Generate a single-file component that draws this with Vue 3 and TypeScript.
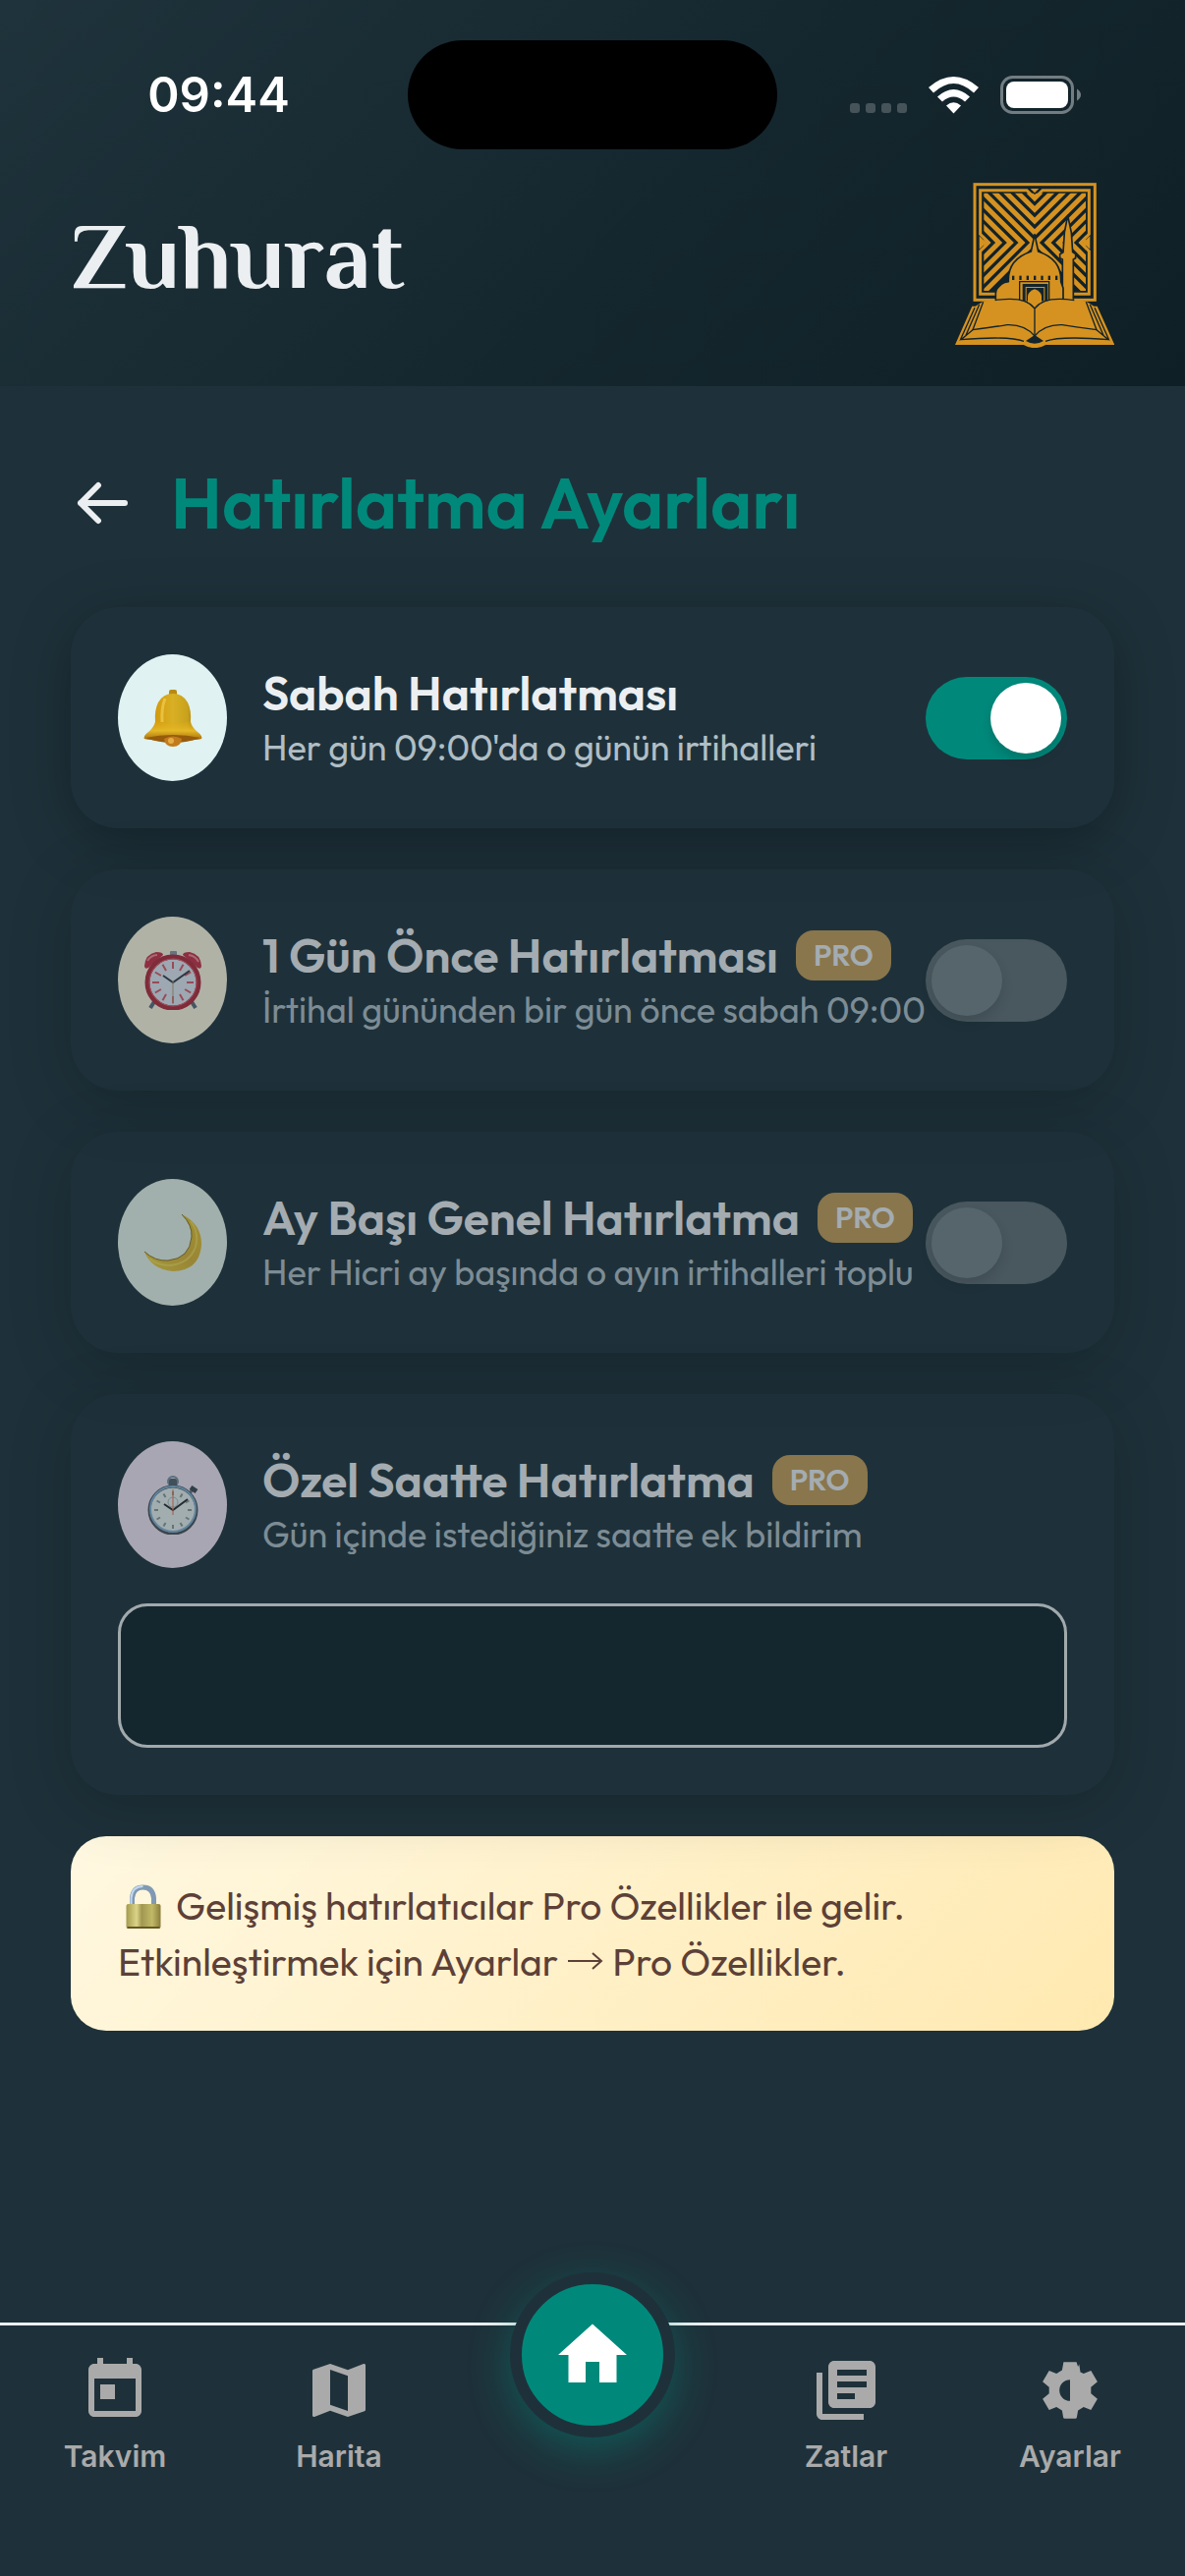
<script setup lang="ts">
import { ref } from 'vue'

type IconName = 'bell' | 'alarm' | 'moon' | 'stopwatch'

interface Reminder {
  id: string
  title: string
  text: string
  icon: IconName
  tint: string
  pro: boolean
  enabled: boolean
  custom?: boolean
}

interface Tab {
  label: string
  path: string
}

const reminders = ref<Reminder[]>([
  { id: 'sabah', title: 'Sabah Hatırlatması', text: "Her gün 09:00'da o günün irtihalleri", icon: 'bell', tint: '#e0f2f1', pro: false, enabled: true },
  { id: 'once', title: '1 Gün Önce Hatırlatması', text: 'İrtihal gününden bir gün önce sabah 09:00', icon: 'alarm', tint: '#fff8e1', pro: true, enabled: false },
  { id: 'aybasi', title: 'Ay Başı Genel Hatırlatma', text: 'Her Hicri ay başında o ayın irtihalleri toplu', icon: 'moon', tint: '#e8f5e9', pro: true, enabled: false },
  { id: 'ozel', title: 'Özel Saatte Hatırlatma', text: 'Gün içinde istediğiniz saatte ek bildirim', icon: 'stopwatch', tint: '#f3e5f5', pro: true, enabled: false, custom: true },
])

const customTime = ref('')

const leftTabs: Tab[] = [
  { label: 'Takvim', path: 'M19 3h-1V1h-2v2H8V1H6v2H5c-1.11 0-1.99.9-1.99 2L3 19c0 1.1.89 2 2 2h14c1.1 0 2-.9 2-2V5c0-1.1-.9-2-2-2zm0 16H5V8h14v11zM7 10h5v5H7z' },
  { label: 'Harita', path: 'M20.5 3l-.16.03L15 5.1 9 3 3.36 4.9c-.21.07-.36.25-.36.48V20.5c0 .28.22.5.5.5l.16-.03L9 18.9l6 2.1 5.64-1.9c.21-.07.36-.25.36-.48V3.5c0-.28-.22-.5-.5-.5zM15 19l-6-2.11V5l6 2.11V19z' },
]

const rightTabs: Tab[] = [
  { label: 'Zatlar', path: 'M4 6H2v14c0 1.1.9 2 2 2h14v-2H4V6zm16-4H8c-1.1 0-2 .9-2 2v12c0 1.1.9 2 2 2h12c1.1 0 2-.9 2-2V4c0-1.1-.9-2-2-2zm-1 5H9V5h10v2zm-4 8H9v-2h6v2zm4-4H9V9h10v2z' },
  { label: 'Ayarlar', path: 'M9.8 2.4H14.2L14.7 4 15.1 3.2 15.5 5.8 16.6 6.3 19.1 5.3 21.3 9.1 19.1 10.9V13.1L21.3 14.9 19.1 18.7 16.6 17.7 14.7 18.8 14.3 21.2Q14.2 21.6 13.8 21.6H10.2Q9.8 21.6 9.7 21.2L9.3 18.8 7.4 17.7 4.9 18.7 2.7 14.9 4.9 13.1V10.9L2.7 9.1 4.9 5.3 7.4 6.3 9.3 5.2ZM12 8.4A3.6 3.6 0 0 0 12 15.6Z' },
]

// Tip heights of the V stripes and tip positions of the sideways chevrons in the crest
const vTips = [95, 130, 165, 200]
const sideTips = [305, 270, 235, 200, 165]
const ticks = Array.from({ length: 12 }, (_, i) => i * 30)
</script>

<template>
  <div class="screen">
    <header class="top">
      <div class="status">
        <time class="clock">09:44</time>
        <div class="island"></div>
        <div class="signals">
          <svg class="dots" viewBox="0 0 58 10" aria-hidden="true">
            <rect v-for="n in 4" :key="n" :x="(n - 1) * 16" width="10" height="10" rx="3" />
          </svg>
          <svg class="wifi" viewBox="0 0 51 38" aria-hidden="true">
            <path d="M0 11Q25.500-11 51 11L46 16.500Q25.500-2.500 5 16.500ZM9 20.500Q25.500 5.500 42 20.500L37 25.500Q25.500 15.500 14 25.500ZM18 29.500Q25.500 23 33 29.500L25.500 37.500Z" />
          </svg>
          <svg class="battery" viewBox="0 0 82 39" aria-hidden="true">
            <rect x="1.500" y="1.500" width="72" height="36" rx="11" fill="none" stroke="#727d82" stroke-width="3" />
            <rect x="6" y="6" width="63" height="27" rx="8" fill="#fff" />
            <path d="M78 13.500Q82 16 82 19.500T78 25.500Z" fill="#727d82" />
          </svg>
        </div>
      </div>
      <div class="brand">
        <h1>Zuhurat</h1>
        <svg class="crest" viewBox="66 48 486 504" role="img" aria-label="Zuhurat">
          <defs>
            <clipPath id="field"><rect x="154" y="80" width="311" height="298" /></clipPath>
          </defs>
          <g fill="none" stroke="#d59220">
            <rect x="126" y="53" width="367" height="353" stroke-width="9" />
            <path d="M143 71H285L309 95 333 71H475V205L450 231 475 257V388H143V257L168 231 143 205Z" stroke-width="9" />
            <g clip-path="url(#field)" stroke-width="15">
              <path v-for="t in vTips" :key="`v${t}`" :d="`M109 ${t - 200}L309 ${t}L509 ${t - 200}`" />
              <path v-for="x in sideTips" :key="`l${x}`" :d="`M${x - 200} 31L${x} 231L${x - 200} 431`" />
              <path v-for="x in sideTips" :key="`r${x}`" :d="`M${818 - x} 31L${618 - x} 231L${818 - x} 431`" />
            </g>
          </g>
          <path d="M296 66H322L309 79ZM140 211 161 231 140 251ZM478 211 457 231 478 251Z" fill="#d59220" />
          <g fill="#d59220" stroke="#13242b" stroke-width="5" stroke-linejoin="round">
            <path d="M394 412V282L386 278V266L396 260 400 200 410 148 421 200 425 260 434 266V278L427 282V412Z" />
            <path d="M190 412V385Q192 364 218 352L229 350Q226 282 298 258L309 206 320 258Q392 282 389 350L396 370V412Z" />
          </g>
          <g fill="#13242b">
            <rect v-for="n in 7" :key="n" :x="218 + n * 22" y="332" width="7" height="13" />
            <path d="M261 408V348H355V408H351V352H265V408Z" />
            <path d="M272 408V357H349V408H340V366H281V408Z" />
            <path d="M284 408V369H337V408Z" />
          </g>
          <path d="M288 412V394Q290 380 309 373 328 380 330 394V425L309 434Z" fill="#d59220" />
          <path d="M118 425H128L152 410Q270 388 309 432 348 388 466 410L490 425H500L553 543H343Q309 562 275 543H66Z" fill="#d59220" />
          <g fill="none" stroke="#13242b" stroke-width="4">
            <path d="M188 407Q280 392 309 432 338 392 430 407M309 432V516" />
            <path d="M152 412 120 497Q190 488 225 482 278 480 309 516 340 480 393 482 428 488 498 497L466 412" />
            <path d="M126 430 82 528M140 420 98 516M492 430 536 528M478 420 520 516M120 497 84 527Q230 515 276 532M498 497 534 527Q388 515 342 532" />
          </g>
          <path d="M282 531 309 513 336 531Q309 548 282 531Z" fill="#13242b" />
        </svg>
      </div>
    </header>

    <main>
      <div class="heading">
        <button type="button" class="back" aria-label="Geri">
          <svg viewBox="0 0 54 54" aria-hidden="true"><path d="M28 9 10 27 28 45M10 27H55" /></svg>
        </button>
        <h2>Hatırlatma Ayarları</h2>
      </div>

      <section v-for="r in reminders" :key="r.id" class="card" :class="{ locked: r.pro }">
        <div class="row">
          <div class="badge-icon" :style="{ background: r.tint }">
            <svg v-if="r.icon === 'bell'" viewBox="0 0 60 60" aria-hidden="true">
              <defs>
                <linearGradient id="bellBody">
                  <stop offset="0" stop-color="#9d6305" /><stop offset=".2" stop-color="#d39a0e" />
                  <stop offset=".5" stop-color="#d9b024" /><stop offset=".75" stop-color="#c8a21c" /><stop offset="1" stop-color="#8f5c08" />
                </linearGradient>
                <linearGradient id="bellRim" x1="0" y1="0" x2="0" y2="1">
                  <stop offset="0" stop-color="#e0a915" stop-opacity="0" /><stop offset=".5" stop-color="#e4b826" /><stop offset="1" stop-color="#a0640a" />
                </linearGradient>
              </defs>
              <rect x="26" y="1" width="8" height="7" rx="2" fill="#b88a12" />
              <path d="M12 34Q11 22 15 14 20 5 30 5T45 14Q49 22 48 34 49 40 57 46 60 49 59 51 30 56 1 51 0 49 3 46 11 40 12 34Z" fill="url(#bellBody)" />
              <path d="M12 32Q30 40 48 32 49 40 57 46 60 49 59 51 30 56 1 51 0 49 3 46 11 40 12 32Z" fill="url(#bellRim)" />
              <path d="M2 50Q30 44 58 50 45 55 30 55T2 50Z" fill="#965c0b" />
              <path d="M21 51Q30 46 39 51 38 59 30 59T21 51Z" fill="#c27b1c" />
              <circle cx="28" cy="53" r="3" fill="#e6ac48" />
              <path d="M22 10Q18 20 19 34" fill="none" stroke="#f5d65a" stroke-width="3" stroke-opacity=".6" />
            </svg>
            <svg v-else-if="r.icon === 'alarm'" viewBox="0 0 60 60" aria-hidden="true">
              <path d="M12 50 7 58M48 50 53 58" stroke="#5b6b7c" stroke-width="4" />
              <path d="M1 15Q2 3 13 1 20 1 20 4L5 17Q1 19 1 15ZM59 15Q58 3 47 1 40 1 40 4L55 17Q59 19 59 15Z" fill="#c92f44" />
              <path d="M4 10Q8 4 14 4M46 4Q53 5 56 11" stroke="#f08b98" stroke-width="2" fill="none" />
              <rect x="27" y="0" width="7" height="5" rx="1" fill="#8b98a6" />
              <circle cx="30" cy="32" r="26" fill="#e2e8f2" stroke="#b3283a" stroke-width="5" />
              <circle cx="30" cy="32" r="24" fill="none" stroke="#e66575" stroke-width="1" />
              <path v-for="a in ticks" :key="a" d="M30 11V18" :transform="`rotate(${a} 30 32)`" stroke="#dc5868" stroke-width="2" />
              <path d="M20 25 30 32 47 20" fill="none" stroke="#333b45" stroke-width="2" />
              <path d="M30 30V54" stroke="#b89c78" stroke-width="1" />
            </svg>
            <svg v-else-if="r.icon === 'moon'" viewBox="0 0 60 60" aria-hidden="true">
              <defs>
                <linearGradient id="crescent" x1="0" y1="1" x2="1" y2="0">
                  <stop offset="0" stop-color="#efd23a" /><stop offset=".5" stop-color="#dcb334" /><stop offset="1" stop-color="#eac52b" />
                </linearGradient>
              </defs>
              <path d="M39 1Q59 11 59 31 58 58 30 59 8 57 1 39 12 49 25 48 48 45 49 23 49 12 39 1Z" fill="url(#crescent)" />
              <path d="M39 1Q50 12 49 24 47 46 25 48 12 49 1 39" fill="none" stroke="#8b721e" stroke-width="1" />
              <path d="M48 8Q57 20 53 34 47 51 27 53 14 53 6 46" fill="none" stroke="#f7e765" stroke-width="2" stroke-opacity=".6" />
            </svg>
            <svg v-else viewBox="0 0 60 60" aria-hidden="true">
              <circle cx="30" cy="6" r="5" fill="none" stroke="#7890a3" stroke-width="2" />
              <rect x="26" y="3" width="8" height="9" rx="2" fill="#53616c" />
              <path d="M47 18 51 13" stroke="#657b8c" stroke-width="3" />
              <path d="M48 12 54 16" stroke="#3c4650" stroke-width="5" />
              <circle cx="30" cy="35" r="24" fill="#e9f0f0" stroke="#4b5157" stroke-width="3" />
              <circle cx="30" cy="34" r="23" fill="none" stroke="#86b1d2" stroke-width="2" />
              <path v-for="a in ticks" :key="a" d="M30 16V20" :transform="`rotate(${a} 30 35)`" stroke="#8c9798" stroke-width="2" />
              <circle cx="30" cy="27" r="5" fill="none" stroke="#aeb9b9" />
              <path d="M21 29 30 35 45 24" fill="none" stroke="#26292c" stroke-width="2" />
              <path d="M30 14V40" stroke="#ed704d" stroke-width="1" />
            </svg>
          </div>
          <div class="copy">
            <div class="title-line">
              <label class="title" :for="r.id">{{ r.title }}</label>
              <span v-if="r.pro" class="pro">PRO</span>
            </div>
            <p>{{ r.text }}</p>
          </div>
          <input v-if="!r.custom" :id="r.id" v-model="r.enabled" class="toggle" type="checkbox" role="switch" :disabled="r.pro" />
        </div>
        <input v-if="r.custom" :id="r.id" v-model="customTime" class="time-field" type="text" disabled />
      </section>

      <p class="note">
        <svg class="lock" viewBox="0 0 48 48" aria-hidden="true">
          <defs>
            <linearGradient id="brass">
              <stop offset="0" stop-color="#a49a4f" /><stop offset=".3" stop-color="#dcd488" /><stop offset=".45" stop-color="#a19750" />
              <stop offset=".75" stop-color="#c1b968" /><stop offset="1" stop-color="#8a7d3a" />
            </linearGradient>
          </defs>
          <path d="M13 23V15Q14 4 24 4T35 15V23" fill="none" stroke="#8099b5" stroke-width="5" />
          <path d="M12 22V15Q13 3 24 3" fill="none" stroke="#c3d9ef" stroke-width="2" />
          <rect x="7" y="21" width="35" height="25" rx="2" fill="url(#brass)" />
          <path d="M8 45H41" stroke="#665822" stroke-width="2" />
        </svg>
        Gelişmiş hatırlatıcılar Pro Özellikler ile gelir.<br />
        Etkinleştirmek için Ayarlar
        <svg class="arrow" viewBox="0 0 39 30" aria-label="→"><path d="M2 15H36M27 7 36 15 27 23" /></svg>
        Pro Özellikler.
      </p>
    </main>

    <nav>
      <a v-for="t in leftTabs" :key="t.label" href="#">
        <svg viewBox="0 0 24 24" aria-hidden="true"><path :d="t.path" /></svg>
        <span>{{ t.label }}</span>
      </a>
      <a class="home" href="#" aria-label="Ana Sayfa">
        <svg viewBox="0 0 24 24" aria-hidden="true"><path d="M10 20v-6h4v6h5v-8h3L12 3 2 12h3v8z" /></svg>
      </a>
      <a v-for="t in rightTabs" :key="t.label" href="#">
        <svg viewBox="0 0 24 24" aria-hidden="true"><path fill-rule="evenodd" :d="t.path" /></svg>
        <span>{{ t.label }}</span>
      </a>
    </nav>
  </div>
</template>

<style>
body {
  margin: 0;
  background: #1e313a;
}
</style>

<style scoped>
* {
  box-sizing: border-box;
}

.screen {
  display: flex;
  flex-direction: column;
  min-height: 100vh;
  background: #1e313a;
  color: #eceff1;
  font-family: Outfit, Lato, "Open Sans", sans-serif;
}

h1,
h2,
p {
  margin: 0;
}

svg {
  display: block;
}

.top {
  padding: 41px 72px 39px;
  background: linear-gradient(135deg, #1f333c, #15272e 55%, #0f1f26);
}

.status {
  display: grid;
  grid-template-columns: 1fr 376px 1fr;
  align-items: center;
  height: 111px;
}

.clock {
  justify-self: center;
  padding-right: 42px;
  color: #fff;
  font: 600 49px/60px Inter, sans-serif;
}

.island {
  height: 111px;
  border-radius: 56px;
  background: #000;
}

.signals {
  display: flex;
  align-items: flex-end;
  justify-content: flex-end;
  gap: 22px;
  padding-right: 34px;
}

.dots {
  width: 58px;
  height: 10px;
  margin-bottom: 1px;
  fill: #465359;
}

.wifi {
  width: 51px;
  height: 38px;
  fill: #fff;
}

.battery {
  width: 82px;
  height: 39px;
}

.brand {
  display: flex;
  align-items: center;
  justify-content: space-between;
  margin-top: 34px;
}

h1 {
  font: 700 96px/108px "El Messiri", Philosopher, "Liberation Serif", serif;
}

.crest {
  width: 162px;
  height: 168px;
}

main {
  display: flex;
  flex-direction: column;
  gap: 42px;
  padding: 72px 72px 48px;
}

.heading {
  display: flex;
  align-items: center;
  gap: 48px;
  height: 93px;
  margin-bottom: 18px;
}

.back {
  padding: 0;
  border: 0;
  background: none;
}

.back svg {
  width: 54px;
  height: 54px;
  overflow: visible;
  fill: none;
  stroke: #eceff1;
  stroke-width: 6;
  stroke-linecap: round;
  stroke-linejoin: round;
}

h2 {
  color: #00897b;
  font-size: 72px;
  font-weight: 600;
  line-height: 90px;
  white-space: nowrap;
}

.card {
  padding: 48px;
  border-radius: 48px;
  background: #1e313a;
  box-shadow: 0 12px 60px rgb(0 0 0 / 30%);
}

.locked {
  opacity: 0.65;
}

.row {
  display: flex;
  align-items: center;
}

.badge-icon {
  display: grid;
  flex: none;
  place-items: center;
  width: 111px;
  height: 129px;
  margin-right: 36px;
  border-radius: 50%;
}

.badge-icon svg {
  width: 60px;
  height: 60px;
}

.copy {
  flex: 1;
  min-width: 0;
  white-space: nowrap;
}

.title-line {
  display: flex;
  align-items: center;
  gap: 18px;
  height: 57px;
  margin-bottom: 3px;
}

.title {
  font-size: 48px;
  font-weight: 600;
  line-height: 57px;
}

.copy p {
  color: #b0bec5;
  font-size: 36px;
  line-height: 48px;
}

.pro {
  padding: 0 18px;
  border-radius: 18px;
  background: #c39b56;
  font-size: 30px;
  font-weight: 600;
  line-height: 51px;
}

.toggle {
  flex: none;
  width: 144px;
  height: 84px;
  margin: 0;
  padding: 6px;
  border-radius: 42px;
  appearance: none;
  background: #606c72;
}

.toggle::before {
  display: block;
  width: 72px;
  height: 72px;
  border-radius: 50%;
  background: #748187;
  box-shadow: 0 6px 12px rgb(0 0 0 / 15%);
  content: "";
}

.toggle:checked {
  background: #00897b;
}

.toggle:checked::before {
  margin-left: auto;
  background: #fff;
}

.time-field {
  display: block;
  width: 100%;
  height: 147px;
  margin-top: 36px;
  padding: 0 36px;
  border: 3px solid #e8eaea;
  border-radius: 30px;
  background: #0f2228;
  color: #eceff1;
  font: inherit;
  font-size: 48px;
}

.note {
  padding: 42px 48px;
  border-radius: 36px;
  background: linear-gradient(135deg, #fff8e1, #ffe9b0);
  color: #5d4037;
  font-size: 39px;
  line-height: 57px;
}

.lock {
  display: inline-block;
  width: 51px;
  height: 48px;
  vertical-align: -11px;
}

.arrow {
  display: inline-block;
  width: 39px;
  height: 30px;
  fill: none;
  stroke: #5d4037;
  stroke-width: 2;
}

nav {
  display: grid;
  grid-template-columns: 1fr 1fr 288px 1fr 1fr;
  justify-items: center;
  height: 258px;
  margin-top: auto;
  padding: 30px 3px 0;
  border-top: 3px solid #eceff1;
}

nav a {
  display: flex;
  flex-direction: column;
  align-items: center;
  gap: 13px;
  height: 124px;
  color: #aaa;
  text-decoration: none;
}

nav a svg {
  width: 72px;
  height: 72px;
  fill: currentColor;
}

nav span {
  font: 600 30px/36px Inter, sans-serif;
}

nav .home {
  justify-content: center;
  width: 168px;
  height: 168px;
  margin-top: -84px;
  border: 12px solid #1e313a;
  border-radius: 50%;
  background: #00897b;
  box-shadow: 0 12px 42px rgb(0 137 123 / 45%);
  color: #fff;
}

nav .home svg {
  width: 84px;
  height: 84px;
}
</style>
